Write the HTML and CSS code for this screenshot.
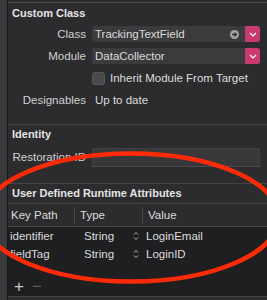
FILE: index.html
```html
<!DOCTYPE html>
<html>

<head>
    <meta charset="UTF-8">
    <title>Inspector</title>
    <link rel="stylesheet" href="styles.css">
</head>

<body>
    <div class="strip"></div>
    <main class="panel">
        <section class="group first">
            <h2 class="group-title">Custom Class</h2>
            <div class="form">
                <span class="label">Class</span>
                <div class="combo">
                    <span class="combo-text">TrackingTextField</span>
                    <span class="goto">
                        <svg width="9" height="9" viewBox="0 0 9 9"><circle cx="4.5" cy="4.5" r="4.5" fill="#a3a3a5"/><path d="M2 4.5h4.2M4.4 2.6l1.9 1.9-1.9 1.9" stroke="#2f2f31" stroke-width="1.3" fill="none"/></svg>
                    </span>
                    <span class="drop"><svg width="8" height="5" viewBox="0 0 8 5"><path d="M1 1l3 3 3-3" stroke="#fff" stroke-width="1.2" fill="none"/></svg></span>
                </div>

                <span class="label">Module</span>
                <div class="combo">
                    <span class="combo-text">DataCollector</span>
                    <span class="drop"><svg width="8" height="5" viewBox="0 0 8 5"><path d="M1 1l3 3 3-3" stroke="#fff" stroke-width="1.2" fill="none"/></svg></span>
                </div>

                <span class="label"></span>
                <label class="check"><span class="box"></span>Inherit Module From Target</label>

                <span class="label">Designables</span>
                <span class="value">Up to date</span>
            </div>
        </section>

        <section class="group">
            <h2 class="group-title">Identity</h2>
            <div class="form">
                <span class="label">Restoration ID</span>
                <div class="textfield"></div>
            </div>
        </section>

        <section class="group last">
            <h2 class="group-title">User Defined Runtime Attributes</h2>
            <div class="table">
                <div class="thead">
                    <span class="th">Key Path</span>
                    <span class="th sep">Type</span>
                    <span class="th sep">Value</span>
                </div>
                <div class="tbody">
                    <div class="tr">
                        <span class="td">identifier</span>
                        <span class="td type">String <svg class="stepper" width="6" height="10" viewBox="0 0 6 10"><path d="M1 3.5l2-2 2 2M1 6.5l2 2 2-2" stroke="#b8b8b8" stroke-width="1" fill="none"/></svg></span>
                        <span class="td">LoginEmail</span>
                    </div>
                    <div class="tr">
                        <span class="td">fieldTag</span>
                        <span class="td type">String <svg class="stepper" width="6" height="10" viewBox="0 0 6 10"><path d="M1 3.5l2-2 2 2M1 6.5l2 2 2-2" stroke="#b8b8b8" stroke-width="1" fill="none"/></svg></span>
                        <span class="td">LoginID</span>
                    </div>
                </div>
                <div class="tfoot">
                    <span class="plus">+</span>
                    <span class="minus">&minus;</span>
                </div>
            </div>
        </section>
    </main>

    <svg class="mark" width="267" height="300" viewBox="0 0 267 300">
        <ellipse cx="131" cy="217.5" rx="148" ry="64" fill="none" stroke="#ff2a08" stroke-width="4.5"/>
    </svg>
</body>

</html>
```

FILE: styles.css
```css
body {
    margin: 0;
    height: 300px;
    overflow: hidden;
    display: flex;
    background-color: #2c2c2e;
    font-family: "Liberation Sans", Arial, sans-serif;
    font-size: 11.5px;
    color: #dcdcdc;
}

.strip {
    width: 7px;
    background-color: #3a3a3c;
    border-right: 1px solid #161617;
    flex: none;
}

.panel {
    flex: 1;
    border-top: 1px solid #4b4b4d;
    margin-top: 2px;
}

.group {
    border-bottom: 1px solid #444446;
    padding-bottom: 16px;
}

.group.last {
    border-bottom: none;
    padding-bottom: 0;
}

.group-title {
    margin: 2px 0 0 4px;
    font-size: 11px;
    font-weight: bold;
    line-height: 14px;
    color: #e4e4e4;
}

.first .group-title {
    margin-top: 3px;
}

.form {
    display: grid;
    grid-template-columns: 78px 1fr;
    column-gap: 6px;
    row-gap: 6px;
    margin-top: 6px;
    padding-right: 7px;
}

.group:nth-child(2) .form {
    margin-top: 7px;
}

.label {
    text-align: right;
    line-height: 16px;
    color: #cfcfcf;
    white-space: nowrap;
}

.group:nth-child(2) .label {
    line-height: 18px;
}

.combo {
    height: 16px;
    display: flex;
    align-items: center;
    background-color: #3b3b3d;
    border-radius: 3px;
}

.combo-text {
    flex: 1;
    padding-left: 3px;
}

.goto {
    display: flex;
    margin-right: 6px;
}

.drop {
    width: 15px;
    height: 16px;
    display: flex;
    align-items: center;
    justify-content: center;
    background-color: #c93a72;
    border-radius: 0 3px 3px 0;
}

.check {
    display: flex;
    align-items: center;
    height: 16px;
}

.box {
    width: 11px;
    height: 11px;
    margin-right: 5px;
    background-color: #4a4a4c;
    border: 1px solid #5a5a5c;
    border-radius: 3px;
}

.value {
    line-height: 16px;
    padding-left: 3px;
}

.textfield {
    height: 17px;
    background-color: #38383a;
    border: 1px solid #414143;
    border-bottom-color: #4a4a4c;
}

.table {
    margin-top: 3px;
    border-top: 1px solid #444446;
}

.thead {
    display: grid;
    grid-template-columns: 66px 68px 1fr;
    height: 22px;
    align-items: center;
    border-bottom: 1px solid #4a4a4c;
}

.th {
    padding-left: 3px;
    line-height: 17px;
}

.th.sep {
    border-left: 1px solid #48484a;
    padding-left: 5px;
}

.tbody,
.tfoot {
    background-color: #1f1f21;
}

.tr {
    display: grid;
    grid-template-columns: 66px 68px 1fr;
    height: 18px;
    align-items: center;
}

.td {
    padding-left: 2px;
}

.td.type {
    display: flex;
    align-items: center;
    justify-content: space-between;
    padding-left: 10px;
    padding-right: 3px;
}

.tr .td:last-child {
    padding-left: 4px;
}

.tfoot {
    height: 32px;
    display: flex;
    align-items: flex-end;
    padding-bottom: 1px;
    border-bottom: 1px solid #48484a;
}

.plus {
    font-size: 17px;
    line-height: 16px;
    margin-left: 6px;
    color: #c8c8c8;
}

.minus {
    font-size: 17px;
    line-height: 16px;
    margin-left: 8px;
    color: #5c5c5e;
}

.mark {
    position: absolute;
    left: 0;
    top: 0;
}
```
